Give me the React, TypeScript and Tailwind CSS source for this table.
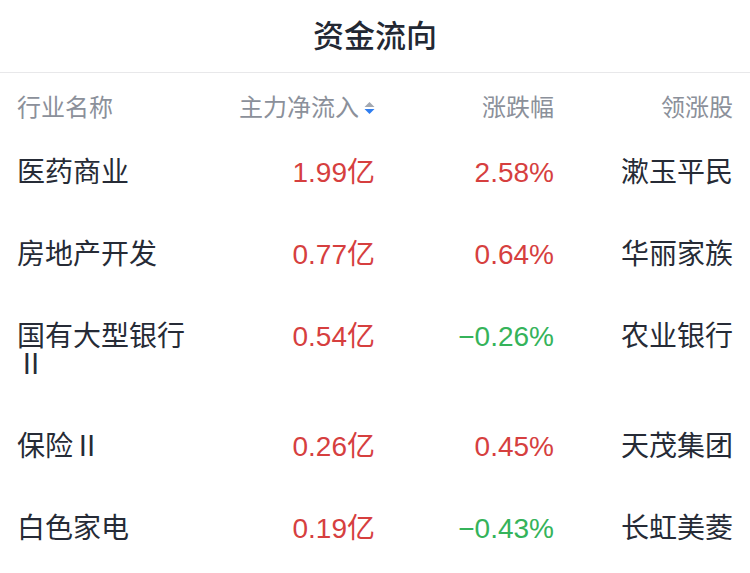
import React from "react";

const rows = [
  { name: "医药商业", flow: "1.99亿", pct: "2.58%", up: true, lead: "漱玉平民" },
  { name: "房地产开发", flow: "0.77亿", pct: "0.64%", up: true, lead: "华丽家族" },
  { name: "国有大型银行Ⅱ", flow: "0.54亿", pct: "−0.26%", up: false, lead: "农业银行" },
  { name: "保险Ⅱ", flow: "0.26亿", pct: "0.45%", up: true, lead: "天茂集团" },
  { name: "白色家电", flow: "0.19亿", pct: "−0.43%", up: false, lead: "长虹美菱" },
];

export default function App() {
  return (
    <div
      className="w-[750px] h-[573px] bg-white overflow-hidden"
      style={{ fontFamily: '"Liberation Sans", "Noto Sans CJK SC", sans-serif' }}
    >
      <div className="h-[73px] flex items-center justify-center border-b border-[#e8e8ea]">
        <span className="text-[31px] font-medium text-[#232833] leading-none">资金流向</span>
      </div>
      <div className="px-[17px]">
        <div className="grid grid-cols-4 h-[70px] items-center text-[24px] text-[#8b909a] leading-none">
          <div>行业名称</div>
          <div className="flex items-center justify-end gap-[5px]">
            <span>主力净流入</span>
            <svg width="11" height="14" viewBox="0 0 11 14">
              <path d="M5.5 1 L10.5 6 L0.5 6 Z" fill="#a3a8b1" />
              <path d="M0.5 8 L10.5 8 L5.5 13 Z" fill="#2f7ef0" />
            </svg>
          </div>
          <div className="text-right">涨跌幅</div>
          <div className="text-right">领涨股</div>
        </div>
        {rows.map((r) => (
          <div
            key={r.name}
            className="grid grid-cols-4 items-start text-[28px] leading-[28px] text-[#262b36] pt-[16px] pb-[38px]"
          >
            <div className="pr-[8px]">{r.name}</div>
            <div className="text-right text-[#d63f3f]">{r.flow}</div>
            <div className={`text-right ${r.up ? "text-[#d63f3f]" : "text-[#35b35a]"}`}>{r.pct}</div>
            <div className="text-right">{r.lead}</div>
          </div>
        ))}
      </div>
    </div>
  );
}
